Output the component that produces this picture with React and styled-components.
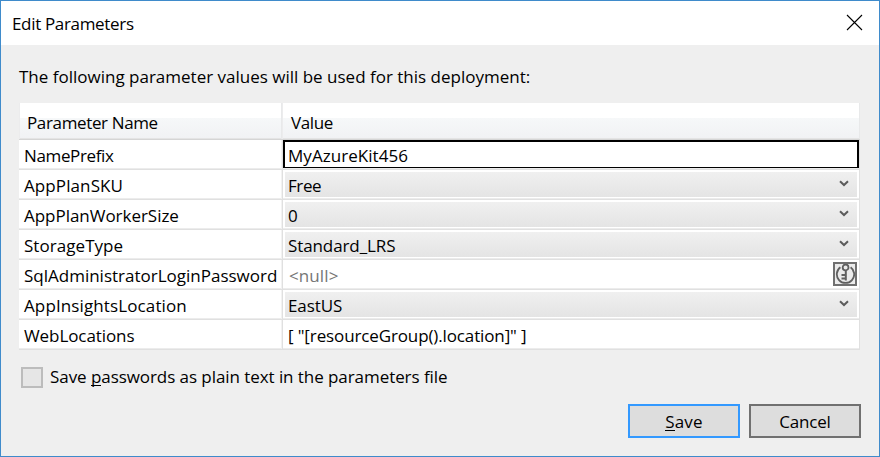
import React from 'react';
import styled, { createGlobalStyle } from 'styled-components';

const Global = createGlobalStyle`
  * { box-sizing: border-box; }
  body { margin: 0; background: #efefef; }
`;

const Dialog = styled.main`
  width: 880px;
  height: 457px;
  display: flex;
  flex-direction: column;
  background: #efefef;
  border: 1px solid #3f8bcb;
  color: #000;
  font: 17px/23px 'Open Sans', 'Noto Sans', sans-serif;
  white-space: pre;
  overflow: hidden;
`;

const TitleBar = styled.header`
  display: flex;
  align-items: center;
  justify-content: space-between;
  height: 44px;
  padding: 1px 16px 0 11px;
  background: #fff;
`;

const Label = styled.span`
  letter-spacing: ${({ $track = 0 }) => $track}px;
`;

const CloseButton = styled.button`
  display: flex;
  margin-top: -2px;
  padding: 0;
  border: 0;
  background: none;
`;

const Content = styled.section`
  display: flex;
  flex-direction: column;
  padding: 20px 18px 0;
`;

const Intro = styled.p`
  margin: 0 0 15px;
  height: 23px;
`;

const Grid = styled.div`
  width: 841px;
  display: flex;
  flex-direction: column;
`;

const HeaderRow = styled.div`
  display: grid;
  grid-template-columns: 263px 1fr;
  height: 37px;
  border-bottom: 1px solid #d5d5d5;
`;

const HeaderCell = styled.div`
  display: flex;
  align-items: center;
  padding: 3px 0 0 ${({ $inset }) => $inset}px;
  border-left: 1px solid #ececed;
  border-right: 1px solid #e8e9ea;
  background: linear-gradient(#fff 0 15px, #f6f8f9 15px, #f1f2f4 35px, #e4e4e4 35px);
`;

const Row = styled.div`
  display: grid;
  grid-template-columns: 264px 1fr;
  height: 30px;
  border-bottom: 1px solid #e0e0e0;
  box-shadow: inset 0 -1px 0 #ececec;
  background: #fff;
`;

const NameCell = styled.div`
  display: flex;
  align-items: center;
  padding: 2px 0 0 5px;
  border-right: 1px solid #e0e0e0;
  box-shadow: inset -1px 0 0 #f2f2f2;
`;

const ValueCell = styled.div`
  display: flex;
  border-right: 1px solid #e0e0e0;
`;

const TextField = styled.div`
  flex: 1;
  display: flex;
  align-items: center;
  padding: 2px 0 0 5px;
`;

const FocusedField = styled.div`
  flex: 1;
  display: flex;
  align-items: center;
  height: 28px;
  padding: 2px 0 0 3px;
  border: solid #000;
  border-width: 2px 2px 1px;
`;

const Select = styled.div`
  flex: 1;
  display: flex;
  align-items: center;
  justify-content: space-between;
  height: 25px;
  margin: 2px 2px 0;
  padding: 2px 8px 0 3px;
  background: linear-gradient(#f0f0f0, #e4e4e4);
`;

const Chevron = styled.svg`
  margin-top: -5px;
`;

const SecretField = styled.div`
  flex: 1;
  display: flex;
  justify-content: space-between;
  padding: 2px 2px 0 6px;
  color: #767676;
`;

const SecretText = styled.span`
  padding-top: 2px;
  letter-spacing: 0.1px;
`;

const KeyButton = styled.button`
  display: flex;
  width: 24px;
  height: 24px;
  padding: 0;
  border: 2px solid #707070;
  background: #ebebeb;
`;

const Option = styled.label`
  display: flex;
  align-items: center;
  height: 23px;
  margin: 15px 0 0 2px;
`;

const CheckBox = styled.span`
  width: 22px;
  height: 21px;
  margin: 2px 7px 0 0;
  border: 2px solid #bcbcbc;
  background: #e6e6e6;
`;

const Mnemonic = styled.span`
  background: linear-gradient(#000, #000) 0 20px / 100% 1px no-repeat;
`;

const Actions = styled.footer`
  display: flex;
  justify-content: flex-end;
  gap: 9px;
  margin-top: 16px;
`;

const Button = styled.button`
  width: 112px;
  height: 34px;
  padding: 1px 0 0;
  border: 2px solid ${({ $primary }) => ($primary ? '#3399ff' : '#707070')};
  background: #ddd;
  color: #000;
  font: inherit;
  letter-spacing: ${({ $primary }) => ($primary ? 0.15 : -0.2)}px;
`;

const parameters = [
  { name: 'NamePrefix', nameTrack: -0.36, value: 'MyAzureKit456', track: 0.05, kind: 'focused' },
  { name: 'AppPlanSKU', nameTrack: 0.1, value: 'Free', track: -0.4, kind: 'select' },
  { name: 'AppPlanWorkerSize', nameTrack: -0.03, value: '0', kind: 'select' },
  { name: 'StorageType', nameTrack: 0.05, value: 'Standard_LRS', track: -0.1, kind: 'select' },
  { name: 'SqlAdministratorLoginPassword', value: '<null>', kind: 'secret' },
  { name: 'AppInsightsLocation', nameTrack: 0.12, value: 'EastUS', track: -0.09, kind: 'select' },
  { name: 'WebLocations', nameTrack: -0.08, value: '[ "[resourceGroup().location]" ]', track: -0.126, kind: 'text' },
];

function Value({ kind, value, track }) {
  const label = <Label $track={track}>{value}</Label>;
  if (kind === 'focused') return <FocusedField>{label}</FocusedField>;
  if (kind === 'text') return <TextField>{label}</TextField>;
  if (kind === 'secret') {
    return (
      <SecretField>
        <SecretText>{value}</SecretText>
        <KeyButton aria-label="Secret">
          <svg width="20" height="20" viewBox="0 0 20 20" fill="none" stroke="#606060">
            <path d="M5.4 3.2A8.7 8.7 0 1 0 15.6 3.2" strokeWidth="1.8" />
            <circle cx="10.6" cy="3.4" r="2.9" strokeWidth="1.8" />
            <path d="M10.8 6.3V16.5M10.6 11H6.5M10.6 14.6H6.5" strokeWidth="2" />
          </svg>
        </KeyButton>
      </SecretField>
    );
  }
  return (
    <Select>
      {label}
      <Chevron width="10" height="7" viewBox="0 0 10 7" fill="none">
        <path d="M1 1.2 5 5 9 1.2" stroke="#5c5c5c" strokeWidth="2" />
      </Chevron>
    </Select>
  );
}

export default function App() {
  return (
    <>
      <Global />
      <Dialog>
        <TitleBar>
          <Label $track={-0.33}>Edit Parameters</Label>
          <CloseButton aria-label="Close">
            <svg width="17" height="17" viewBox="0 0 17 17" stroke="#000" strokeWidth="1.1">
              <path d="M1 1 16 16M16 1 1 16" />
            </svg>
          </CloseButton>
        </TitleBar>
        <Content>
          <Intro>The following parameter values will be used for this deployment:</Intro>
          <Grid>
            <HeaderRow>
              <HeaderCell $inset={7}><Label $track={-0.36}>Parameter Name</Label></HeaderCell>
              <HeaderCell $inset={8}><Label $track={-0.4}>Value</Label></HeaderCell>
            </HeaderRow>
            {parameters.map((p) => (
              <Row key={p.name}>
                <NameCell><Label $track={p.nameTrack}>{p.name}</Label></NameCell>
                <ValueCell><Value {...p} /></ValueCell>
              </Row>
            ))}
          </Grid>
          <Option>
            <CheckBox />
            <Label $track={-0.065}>Save <Mnemonic>p</Mnemonic>asswords as plain text in the parameters file</Label>
          </Option>
          <Actions>
            <Button $primary><Mnemonic>S</Mnemonic>ave</Button>
            <Button>Cancel</Button>
          </Actions>
        </Content>
      </Dialog>
    </>
  );
}
